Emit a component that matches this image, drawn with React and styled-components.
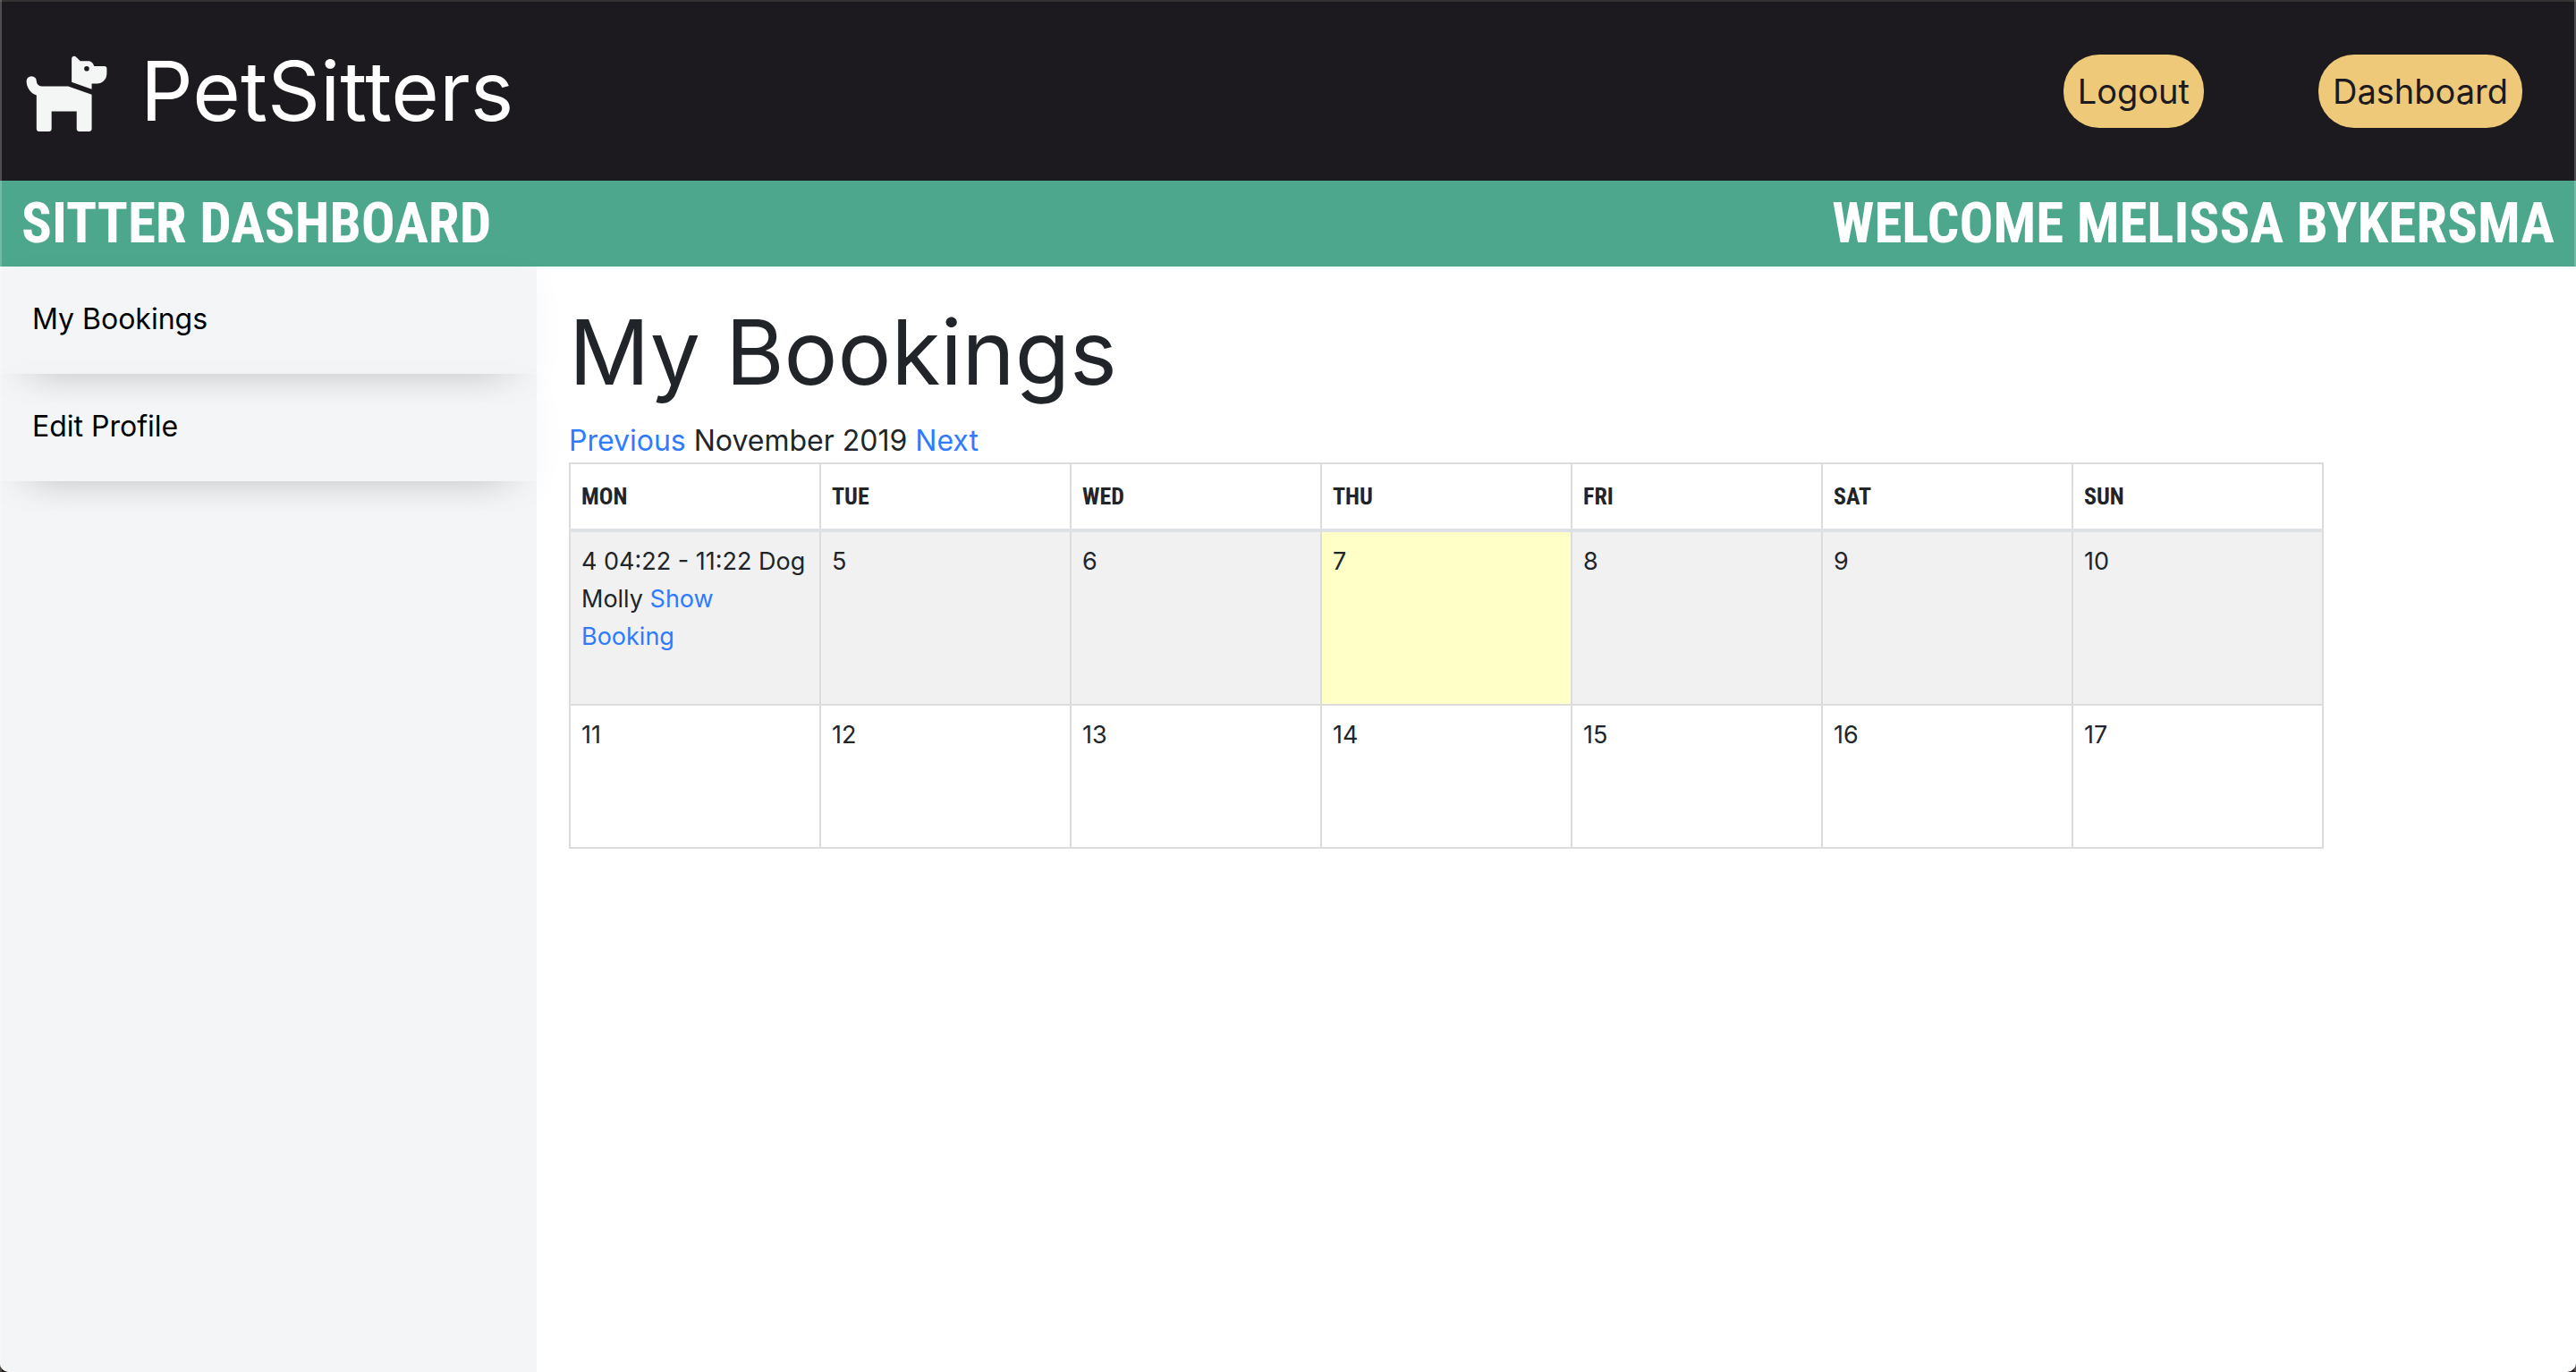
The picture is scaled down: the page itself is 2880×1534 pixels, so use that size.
import React from "react";
import styled, { createGlobalStyle } from "styled-components";
import { FaDog } from "react-icons/fa";

const displayFont = `"Roboto Condensed", "Liberation Sans Narrow", "Liberation Sans", sans-serif`;

const GlobalStyle = createGlobalStyle`
  *, *::before, *::after { box-sizing: border-box; }
  body {
    margin: 0;
    background: #231a1c;
    color: #212529;
    font-family: Inter, "Open Sans", sans-serif;
    font-size: 32px;
    line-height: 48px;
  }
`;

const Page = styled.div`
  display: flex;
  flex-direction: column;
  min-height: 100vh;
  overflow: hidden;
  background: #fff;
  border-radius: 0 0 10px 10px;

  &::after {
    content: "";
    position: fixed;
    inset: 0;
    border: solid rgba(255, 255, 255, 0.22);
    border-width: 0 2px;
    pointer-events: none;
  }
`;

const Header = styled.header`
  display: flex;
  align-items: center;
  justify-content: space-between;
  padding: 40px 60px;
  background: #1c1a1e;
  border-top: 2px solid #343233;
  padding-left: 24px;
`;

const Brand = styled.a`
  display: flex;
  align-items: center;
  gap: 32px;
  color: #fff;
  font-size: 92px;
  line-height: 120px;
  text-decoration: none;

  svg {
    color: #f4f5f5;
    width: 101px;
    height: 90px;
  }
`;

const HeaderNav = styled.nav`
  display: flex;
  gap: 128px;
`;

const PillButton = styled.button`
  padding: 14px 16px;
  border: 0;
  border-radius: 40px;
  background: #eec97a;
  color: #1c1a1e;
  font: inherit;
  font-size: 38px;
  line-height: 54px;
`;

const Banner = styled.div`
  display: flex;
  justify-content: space-between;
  padding: 0 24px;
  background: #4ca78d;
`;

const BannerTitle = styled.h2`
  margin: 0;
  color: #fff;
  font-family: ${displayFont};
  font-size: 63px;
  font-weight: 700;
  line-height: 96px;
  text-transform: uppercase;
`;

const Body = styled.div`
  display: flex;
  flex: 1;
`;

const Sidebar = styled.nav`
  flex: 0 0 600px;
  background: #f4f5f7;
`;

const SidebarLink = styled.a`
  display: block;
  padding: 35px 36px 37px;
  color: #000;
  text-decoration: none;
  box-shadow:
    0 10px 40px rgba(0, 0, 0, 0.03),
    0 38px 40px -38px rgba(0, 0, 0, 0.18);
`;

const Main = styled.main`
  flex: 1;
  padding: 36px 282px 36px 36px;
`;

const Title = styled.h1`
  margin: 0 0 15px;
  font-size: 100px;
  font-weight: 400;
  line-height: 120px;
`;

const Link = styled.a`
  color: #2f7bff;
  text-decoration: none;
`;

const Calendar = styled.table`
  width: 100%;
  table-layout: fixed;
  border-collapse: collapse;
  font-size: 27px;
  line-height: 42px;
`;

const HeadCell = styled.th`
  padding: 15px 12px;
  border: 2px solid #dcdcdc;
  border-bottom: 4px solid #dee2e6;
  font-family: ${displayFont};
  font-size: 26px;
  font-weight: 700;
  text-align: left;
  text-transform: uppercase;
`;

const DayRow = styled.tr`
  height: ${(p) => (p.$busy ? 195 : 160)}px;
  background: ${(p) => (p.$busy ? "#f1f1f1" : "#fff")};
`;

const DayCell = styled.td`
  padding: 12px;
  border: 2px solid #dcdcdc;
  vertical-align: top;
  background: ${(p) => (p.$today ? "#ffffc8" : "transparent")};
`;

const weekdays = ["Mon", "Tue", "Wed", "Thu", "Fri", "Sat", "Sun"];
const weeks = [
  [4, 5, 6, 7, 8, 9, 10],
  [11, 12, 13, 14, 15, 16, 17],
];
const today = 7;
const bookings = { 4: "04:22 - 11:22 Dog Molly" };

export default function App() {
  return (
    <>
      <GlobalStyle />
      <Page>
        <Header>
          <Brand href="#">
            <FaDog aria-hidden="true" />
            <span>PetSitters</span>
          </Brand>
          <HeaderNav>
            <PillButton type="button">Logout</PillButton>
            <PillButton type="button">Dashboard</PillButton>
          </HeaderNav>
        </Header>
        <Banner>
          <BannerTitle>Sitter Dashboard</BannerTitle>
          <BannerTitle>Welcome Melissa Bykersma</BannerTitle>
        </Banner>
        <Body>
          <Sidebar>
            <SidebarLink href="#bookings">My Bookings</SidebarLink>
            <SidebarLink href="#profile">Edit Profile</SidebarLink>
          </Sidebar>
          <Main>
            <Title>My Bookings</Title>
            <div>
              <Link href="#previous">Previous</Link> November 2019{" "}
              <Link href="#next">Next</Link>
            </div>
            <Calendar>
              <thead>
                <tr>
                  {weekdays.map((d) => (
                    <HeadCell key={d} scope="col">{d}</HeadCell>
                  ))}
                </tr>
              </thead>
              <tbody>
                {weeks.map((week) => (
                  <DayRow key={week[0]} $busy={week.some((d) => bookings[d])}>
                    {week.map((d) => (
                      <DayCell key={d} $today={d === today}>
                        {bookings[d] ? `${d} ${bookings[d]} ` : d}
                        {bookings[d] && <Link href="#booking">Show Booking</Link>}
                      </DayCell>
                    ))}
                  </DayRow>
                ))}
              </tbody>
            </Calendar>
          </Main>
        </Body>
      </Page>
    </>
  );
}
